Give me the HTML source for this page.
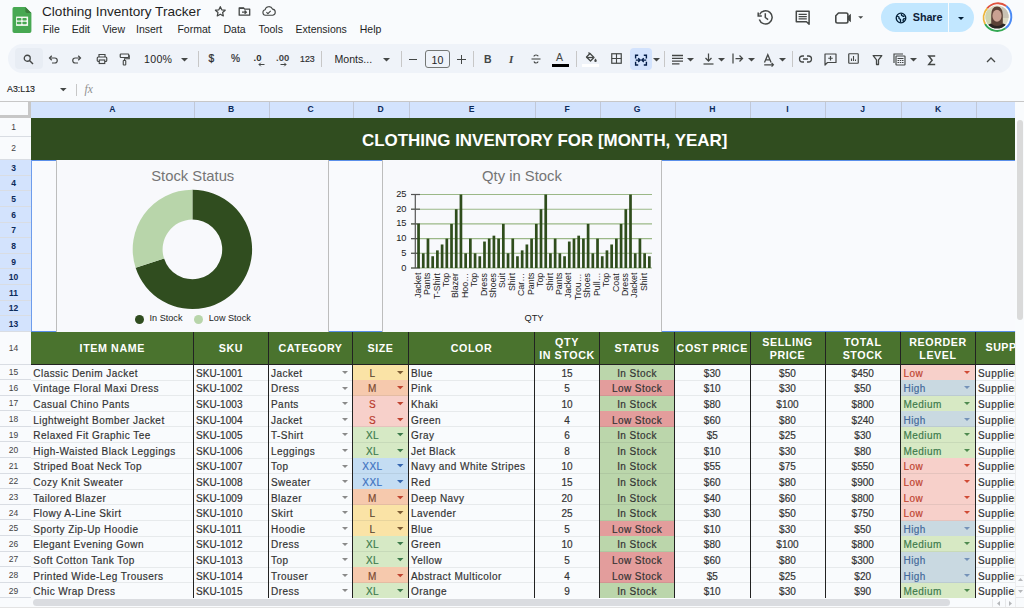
<!DOCTYPE html><html><head><meta charset="utf-8"><style>
*{box-sizing:border-box;margin:0;padding:0}
html,body{width:1024px;height:608px;overflow:hidden;background:#F9FBFD;font-family:"Liberation Sans",sans-serif;color:#1f1f1f}
.a{position:absolute}
.t{position:absolute;white-space:nowrap;line-height:1}
.mont{letter-spacing:0.7px}
svg{position:absolute;overflow:visible}
</style></head><body>

<svg class="a" style="left:12px;top:7px" width="20" height="26" viewBox="0 0 20 26">
<path d="M1.8 0H13.4L19.4 6V24.2A1.8 1.8 0 0 1 17.6 26H2.3A1.8 1.8 0 0 1 0.5 24.2V1.8A1.8 1.8 0 0 1 1.8 0Z" fill="#47A852"/>
<path d="M13.4 0L19.4 6H15.2A1.8 1.8 0 0 1 13.4 4.2Z" fill="#3A7D3C"/>
<rect x="4.1" y="9.6" width="12" height="9.3" fill="#F4F8F2"/>
<rect x="4.9" y="10.9" width="4.5" height="2.6" rx="0.8" fill="#47A852"/><rect x="10.4" y="10.9" width="4.3" height="2.6" rx="0.8" fill="#47A852"/>
<rect x="4.9" y="14.7" width="4.5" height="2.6" rx="0.8" fill="#47A852"/><rect x="10.4" y="14.7" width="4.3" height="2.6" rx="0.8" fill="#47A852"/>
</svg>
<div class="t" style="left:42px;top:4.5px;font-size:13.6px;color:#1f1f1f">Clothing Inventory Tracker</div>
<div class="t" style="left:42.8px;top:23.5px;font-size:10.5px;color:#1f1f1f">File</div>
<div class="t" style="left:71.8px;top:23.5px;font-size:10.5px;color:#1f1f1f">Edit</div>
<div class="t" style="left:102.4px;top:23.5px;font-size:10.5px;color:#1f1f1f">View</div>
<div class="t" style="left:136px;top:23.5px;font-size:10.5px;color:#1f1f1f">Insert</div>
<div class="t" style="left:177.4px;top:23.5px;font-size:10.5px;color:#1f1f1f">Format</div>
<div class="t" style="left:223.5px;top:23.5px;font-size:10.5px;color:#1f1f1f">Data</div>
<div class="t" style="left:258.4px;top:23.5px;font-size:10.5px;color:#1f1f1f">Tools</div>
<div class="t" style="left:295.5px;top:23.5px;font-size:10.5px;color:#1f1f1f">Extensions</div>
<div class="t" style="left:359.75px;top:23.5px;font-size:10.5px;color:#1f1f1f">Help</div>
<svg style="left:0;top:0" width="300" height="30" viewBox="0 0 300 30">
<path transform="translate(220.3 11.6) scale(0.88) translate(-220.3 -11.2)" d="M220.3 5.6l1.65 3.55 3.9 0.45-2.9 2.65 0.8 3.85-3.45-1.95-3.45 1.95 0.8-3.85-2.9-2.65 3.9-0.45z" fill="none" stroke="#444746" stroke-width="1.4" stroke-linejoin="round"/>
<path d="M239.2 7.8h4.2l1.2 1.3h5.1v6.1h-10.5z" fill="none" stroke="#444746" stroke-width="1.3" stroke-linejoin="round"/>
<path d="M239.2 7.8h4.2l1.2 1.3h-5.4z" fill="#444746"/>
<path d="M242 12.2h4.4M244.6 10.5l1.8 1.7-1.8 1.7" fill="none" stroke="#444746" stroke-width="1.2"/>
<path transform="translate(268.3 11.5) scale(0.93) translate(-268.3 -11.5)" d="M265.2 15.6a3 3 0 0 1-0.4-5.9 4.2 4.2 0 0 1 8-0.8 3.4 3.4 0 0 1 0.3 6.7z" fill="none" stroke="#444746" stroke-width="1.2" stroke-linejoin="round"/>
<path d="M266.4 12.1l1.5 1.5 2.8-2.8" fill="none" stroke="#444746" stroke-width="1.1"/>
</svg>

<svg style="left:0;top:0" width="1024" height="40" viewBox="0 0 1024 40">
<path d="M759.6 14.5A6.6 6.6 0 1 1 759.3 19.5" fill="none" stroke="#444746" stroke-width="1.5"/>
<path d="M758.2 12.5v3.6h3.6" fill="none" stroke="#444746" stroke-width="1.5"/>
<path d="M765.3 13.2v4.3l2.8 2.2" fill="none" stroke="#444746" stroke-width="1.5"/>
<path d="M796.3 11.2h12.8v13l-2.6-2.4h-10.2z" fill="none" stroke="#444746" stroke-width="1.5" stroke-linejoin="round"/>
<path d="M798.6 14.3h8.2M798.6 16.6h8.2M798.6 18.9h8.2" stroke="#444746" stroke-width="1.2"/>
<path d="M838.5 13h7.7q1.7 0 1.7 1.7v6.6q0 1.7-1.7 1.7h-8.7q-1.7 0-1.7-1.7v-5.6z" fill="none" stroke="#444746" stroke-width="1.6" stroke-linejoin="round"/>
<path d="M847.5 16.5l3.4-2.8v8.6l-3.4-2.8z" fill="#444746"/>
<path d="M858.2 16.2h5l-2.5 2.5z" fill="#444746"/>
</svg>

<div class="a" style="left:881px;top:3px;width:93px;height:29px;border-radius:15px;background:#C2E7FF"></div>
<div class="a" style="left:948px;top:3px;width:1px;height:29px;background:#F9FBFD"></div>
<svg style="left:894.5px;top:11.5px" width="12" height="12" viewBox="0 0 24 24"><circle cx="12" cy="12" r="9.6" fill="none" stroke="#001d35" stroke-width="2.6"/><path d="M4 8l4 2v3l3 2v6M13 3.5v3l3 2h3M21 14l-3-1-2 3 1 4" fill="none" stroke="#001d35" stroke-width="2.6" stroke-linejoin="round"/></svg>
<div class="t" style="left:912.8px;top:11.8px;font-size:10.8px;font-weight:bold;color:#0e2238;letter-spacing:-0.1px">Share</div>
<svg style="left:957.8px;top:16.5px" width="6" height="3" viewBox="0 0 8 4"><path d="M0 0h8L4 4z" fill="#001d35"/></svg>

<svg style="left:982.3px;top:2.3px" width="30" height="30" viewBox="0 0 30 30">
<path d="M5.2 6.3A14 14 0 0 1 24.3 4.1" fill="none" stroke="#E0533F" stroke-width="1.9"/>
<path d="M24.3 4.1A14 14 0 0 1 23.5 26.2" fill="none" stroke="#4A8AF4" stroke-width="1.9"/>
<path d="M23.5 26.2A14 14 0 0 1 3.1 22" fill="none" stroke="#34A853" stroke-width="1.9"/>
<path d="M3.1 22A14 14 0 0 1 5.2 6.3" fill="none" stroke="#EDB53A" stroke-width="1.9"/>
<defs><clipPath id="avc"><circle cx="15" cy="15" r="11.6"/></clipPath></defs>
<g clip-path="url(#avc)">
<rect width="30" height="30" fill="#dcd9c2"/>
<rect x="2" y="8" width="7" height="14" fill="#cfd4b0"/>
<rect x="20" y="4" width="8" height="12" fill="#c9c2b4"/>
<path d="M9.2 26V13q0-8.5 5.8-8.5t5.8 8.5v13z" fill="#5b4236"/>
<ellipse cx="15" cy="13.8" rx="4.6" ry="6" fill="#c9a192"/>
<path d="M2 30q1-7 7-8.5 3 2.5 6 2.5t6-2.5q6 1.5 7 8.5z" fill="#2a2522"/>
</g>
</svg>
<div class="a" style="left:8px;top:43.5px;width:1004px;height:29.5px;border-radius:15px;background:#EFF3F9"></div>
<div class="a" style="left:15px;top:48px;width:28px;height:21px;border-radius:4px;background:#E8EDF4"></div>
<div class="a" style="left:0;top:0.8px;width:1024px;height:0">
<svg style="left:23px;top:53px" width="11" height="11" viewBox="0 0 22 22"><circle cx="8.5" cy="8.5" r="6" fill="none" stroke="#444746" stroke-width="2.6"/><path d="M13 13l7 7" stroke="#444746" stroke-width="2.8"/></svg>
<svg style="left:48px;top:53px" width="11" height="11" viewBox="0 0 22 22"><path d="M4 8h9.5a5 5 0 0 1 0 10H8" fill="none" stroke="#444746" stroke-width="2.4"/><path d="M7.5 3.5L3 8l4.5 4.5" fill="none" stroke="#444746" stroke-width="2.4"/></svg>
<svg style="left:71px;top:53px" width="11" height="11" viewBox="0 0 22 22"><path d="M18 8H8.5a5 5 0 0 0 0 10H14" fill="none" stroke="#444746" stroke-width="2.4"/><path d="M14.5 3.5L19 8l-4.5 4.5" fill="none" stroke="#444746" stroke-width="2.4"/></svg>
<svg style="left:95.5px;top:52.5px" width="12" height="12" viewBox="0 0 24 24"><path d="M6 8V3h12v5" fill="none" stroke="#444746" stroke-width="2.3"/><rect x="2.5" y="8" width="19" height="9" rx="2" fill="none" stroke="#444746" stroke-width="2.3"/><rect x="6.5" y="14" width="11" height="7" fill="#EFF3F9" stroke="#444746" stroke-width="2.3"/></svg>
<svg style="left:119px;top:52px" width="11" height="13" viewBox="0 0 22 26"><rect x="2.5" y="2" width="17" height="7" rx="1.5" fill="none" stroke="#444746" stroke-width="2.4"/><path d="M19.5 5.5h1v6H11v4" fill="none" stroke="#444746" stroke-width="2.2"/><rect x="8.5" y="15" width="5" height="9" rx="1.2" fill="none" stroke="#444746" stroke-width="2.2"/></svg>
<div class="t" style="left:144px;top:53.5px;font-size:10.6px;color:#1f1f1f;letter-spacing:0.3px">100%</div>
<svg style="left:181.0px;top:57px" width="7" height="3.5" viewBox="0 0 8 4"><path d="M0 0h8L4 4z" fill="#444746"/></svg>
<div class="a" style="left:198px;top:50.5px;width:1px;height:16px;background:#C7C7C7"></div>
<div class="t" style="left:208.5px;top:53.5px;font-size:10.2px;color:#2f3032;-webkit-text-stroke:0.25px #2f3032">$</div>
<div class="t" style="left:231px;top:53.5px;font-size:10.2px;color:#2f3032;-webkit-text-stroke:0.2px #2f3032">%</div>
<div class="t" style="left:253.5px;top:52px;font-size:9.5px;font-weight:bold;color:#2f3032">.0</div><svg style="left:258px;top:61px" width="7" height="5" viewBox="0 0 14 10"><path d="M13 5H2M5.5 1.5L2 5l3.5 3.5" fill="none" stroke="#444746" stroke-width="2"/></svg>
<div class="t" style="left:276px;top:52px;font-size:9.5px;font-weight:bold;color:#444746">.00</div><svg style="left:280px;top:61px" width="7" height="5" viewBox="0 0 14 10"><path d="M1 5h11M8.5 1.5L12 5l-3.5 3.5" fill="none" stroke="#444746" stroke-width="2"/></svg>
<div class="t" style="left:300px;top:54px;font-size:8.8px;color:#2f3032;-webkit-text-stroke:0.2px #2f3032">123</div>
<div class="a" style="left:320.5px;top:50.5px;width:1px;height:16px;background:#C7C7C7"></div>
<div class="t" style="left:334.5px;top:53.5px;font-size:10.6px;color:#1f1f1f">Monts...</div>
<svg style="left:383.0px;top:57px" width="7" height="3.5" viewBox="0 0 8 4"><path d="M0 0h8L4 4z" fill="#444746"/></svg>
<div class="a" style="left:401px;top:50.5px;width:1px;height:16px;background:#C7C7C7"></div>
<div class="a" style="left:409px;top:58px;width:8px;height:1.3px;background:#444746"></div>
<div class="a" style="left:425px;top:49.5px;width:25px;height:18px;border:1px solid #747775;border-radius:3px"></div>
<div class="t" style="left:431.5px;top:54px;font-size:10.6px;color:#1f1f1f">10</div>
<div class="a" style="left:457px;top:58px;width:9px;height:1.3px;background:#444746"></div><div class="a" style="left:460.85px;top:54px;width:1.3px;height:9px;background:#444746"></div>
<div class="a" style="left:472.5px;top:50.5px;width:1px;height:16px;background:#C7C7C7"></div>
<div class="t" style="left:484px;top:53px;font-size:10.5px;font-weight:bold;color:#444746">B</div>
<div class="t" style="left:509px;top:53px;font-size:11px;font-style:italic;font-weight:bold;font-family:Liberation Serif,serif;color:#444746">I</div>
<svg style="left:530px;top:52px" width="12" height="12" viewBox="0 0 24 24"><path d="M3 12h18" stroke="#444746" stroke-width="2.2"/><path d="M16.5 6.5Q15.5 4 12 4Q8 4 8 7M8 17Q9 20 12 20Q16 20 16 17" fill="none" stroke="#444746" stroke-width="2.4"/></svg>
<div class="t" style="left:556px;top:51.5px;font-size:10.5px;color:#444746">A</div><div class="a" style="left:552px;top:63px;width:17px;height:3px;background:#000"></div>
<div class="a" style="left:576px;top:50.5px;width:1px;height:16px;background:#C7C7C7"></div>
<svg style="left:584px;top:51px" width="14" height="12" viewBox="0 0 28 24"><path d="M5 10L12 3l8 8-7 7z" fill="none" stroke="#444746" stroke-width="2.6" stroke-linejoin="round"/><path d="M5 11h14" stroke="#444746" stroke-width="2.5"/><path d="M23 13q-2.5 3-2.5 4.5a2.5 2.5 0 0 0 5 0q0-1.5-2.5-4.5z" fill="#444746"/><path d="M9 1l3 3" stroke="#444746" stroke-width="2.4"/></svg><div class="a" style="left:582px;top:63.5px;width:17px;height:2.5px;background:#fff"></div>
<svg style="left:610.5px;top:52.5px" width="11" height="11" viewBox="0 0 22 22"><rect x="1.5" y="1.5" width="19" height="19" fill="none" stroke="#444746" stroke-width="2.4"/><path d="M11 1.5v19M1.5 11h19" stroke="#444746" stroke-width="2.2"/></svg>
<div class="a" style="left:629.5px;top:47px;width:22.5px;height:22px;border-radius:4px;background:#D3E3FD"></div>
<svg style="left:0;top:0" width="1024" height="80" viewBox="0 0 1024 80"><path d="M638.2 54.2h-2.6v3.2M635.6 60.8v3.2h2.6M643.8 54.2h2.6v3.2M646.4 60.8v3.2h-2.6" fill="none" stroke="#041E49" stroke-width="1.4"/><path d="M635.8 59.1h3.8M638.2 57.2l2 1.9-2 1.9M646.2 59.1h-3.8M643.8 57.2l-2 1.9 2 1.9" fill="none" stroke="#041E49" stroke-width="1.3"/></svg>
<svg style="left:653.0px;top:57px" width="7" height="3.5" viewBox="0 0 8 4"><path d="M0 0h8L4 4z" fill="#444746"/></svg>
<div class="a" style="left:664px;top:50.5px;width:1px;height:16px;background:#C7C7C7"></div>
<svg style="left:0;top:0" width="1024" height="80" viewBox="0 0 1024 80"><path d="M672 54.5h11M672 57.3h11M672 60.1h11M672 62.9h7.5" stroke="#444746" stroke-width="1.3"/></svg>
<svg style="left:686.5px;top:57px" width="7" height="3.5" viewBox="0 0 8 4"><path d="M0 0h8L4 4z" fill="#444746"/></svg>
<svg style="left:703px;top:52px" width="11" height="12" viewBox="0 0 22 24"><path d="M11 1v15M5 10l6 6 6-6" fill="none" stroke="#444746" stroke-width="2.5"/><path d="M1 22h20" stroke="#444746" stroke-width="2.5"/></svg>
<svg style="left:717.5px;top:57px" width="7" height="3.5" viewBox="0 0 8 4"><path d="M0 0h8L4 4z" fill="#444746"/></svg>
<svg style="left:732px;top:52.5px" width="12" height="11" viewBox="0 0 24 22"><path d="M2 1v20" stroke="#444746" stroke-width="2.5"/><path d="M7 11h14M15 5l6 6-6 6" fill="none" stroke="#444746" stroke-width="2.5"/></svg>
<svg style="left:748.0px;top:57px" width="7" height="3.5" viewBox="0 0 8 4"><path d="M0 0h8L4 4z" fill="#444746"/></svg>
<svg style="left:0;top:0" width="1024" height="80" viewBox="0 0 1024 80"><path d="M764.5 61.5l3.3-7.8 3.3 7.8M765.7 58.8h4.2" fill="none" stroke="#444746" stroke-width="1.3"/><path d="M764.2 63.8h9M771.6 62l1.8 1.8-1.8 1.8" fill="none" stroke="#444746" stroke-width="1.2"/></svg>
<svg style="left:779.0px;top:57px" width="7" height="3.5" viewBox="0 0 8 4"><path d="M0 0h8L4 4z" fill="#444746"/></svg>
<div class="a" style="left:792px;top:50.5px;width:1px;height:16px;background:#C7C7C7"></div>
<svg style="left:799px;top:54px" width="13" height="8" viewBox="0 0 26 16"><path d="M10 2H7a6 6 0 0 0 0 12h3M16 2h3a6 6 0 0 1 0 12h-3M8 8h10" fill="none" stroke="#444746" stroke-width="2.6"/></svg>
<svg style="left:823.5px;top:52px" width="13" height="13" viewBox="0 0 26 26"><path d="M2 2h22v17H7l-5 5z" fill="none" stroke="#444746" stroke-width="2.4" stroke-linejoin="round"/><path d="M13 6v9M8.5 10.5h9" stroke="#444746" stroke-width="2.4"/></svg>
<svg style="left:848px;top:52.5px" width="11" height="11" viewBox="0 0 22 22"><rect x="1.5" y="1.5" width="19" height="19" rx="1" fill="none" stroke="#444746" stroke-width="2.4"/><path d="M7 16V11M11 16V6M15 16v-3" stroke="#444746" stroke-width="2.2"/></svg>
<svg style="left:0;top:0" width="1024" height="80" viewBox="0 0 1024 80"><path d="M873.2 54.6h8.6l-3.3 4.3v4.6h-2v-4.6z" fill="none" stroke="#444746" stroke-width="1.3" stroke-linejoin="round"/></svg>
<svg style="left:893px;top:52px" width="13" height="13" viewBox="0 0 26 26"><rect x="6" y="6" width="18" height="18" rx="1" fill="none" stroke="#444746" stroke-width="2.3"/><path d="M2 20V2h18" fill="none" stroke="#444746" stroke-width="2.3"/><path d="M9 11h12M9 15h3M13.5 15h3M18 15h3M9 19h3M13.5 19h3M18 19h3" stroke="#444746" stroke-width="2"/></svg>
<svg style="left:909.5px;top:57px" width="7" height="3.5" viewBox="0 0 8 4"><path d="M0 0h8L4 4z" fill="#444746"/></svg>
<svg style="left:0;top:0" width="1024" height="80" viewBox="0 0 1024 80"><path d="M935.2 55h-6.4l3.3 4.2-3.3 4.2h6.4" fill="none" stroke="#444746" stroke-width="1.5" stroke-linejoin="miter"/></svg>
<svg style="left:986px;top:56px" width="10" height="6" viewBox="0 0 20 12"><path d="M2 10l8-8 8 8" fill="none" stroke="#444746" stroke-width="2.6"/></svg>
</div>
<div class="t" style="left:7px;top:85.4px;font-size:8.85px;color:#1f1f1f;-webkit-text-stroke:0.15px #1f1f1f">A3:L13</div>
<svg style="left:60.2px;top:87.6px" width="6.6" height="3.3" viewBox="0 0 8 4"><path d="M0 0h8L4 4z" fill="#444746"/></svg>
<div class="a" style="left:76px;top:84px;width:1px;height:12px;background:#C7C7C7"></div>
<div class="t" style="left:84.5px;top:83.5px;font-size:11.5px;font-style:italic;font-family:'Liberation Serif',serif;color:#8f8f8f">fx</div>
<div class="a" style="left:0;top:100.5px;width:1024px;height:1px;background:#C7C7C7"></div>
<div class="a" style="left:0;top:101.5px;width:31px;height:16.5px;background:#F9FBFD"></div>
<div class="a" style="left:31px;top:101.5px;width:984px;height:16.5px;background:#D3E3FD"></div>
<div class="a" style="left:27.5px;top:101px;width:3.5px;height:17px;background:#C7C7C7"></div>
<div class="a" style="left:0;top:115px;width:31px;height:3px;background:#C7C7C7"></div>
<div class="a" style="left:193.5px;top:101.5px;width:1px;height:16.5px;background:#C0C8D8"></div>
<div class="t" style="left:31px;width:162.5px;text-align:center;top:105px;font-size:8.6px;font-weight:bold;color:#0b2a5a">A</div>
<div class="a" style="left:268.5px;top:101.5px;width:1px;height:16.5px;background:#C0C8D8"></div>
<div class="t" style="left:193.5px;width:75.0px;text-align:center;top:105px;font-size:8.6px;font-weight:bold;color:#0b2a5a">B</div>
<div class="a" style="left:352.5px;top:101.5px;width:1px;height:16.5px;background:#C0C8D8"></div>
<div class="t" style="left:268.5px;width:84.0px;text-align:center;top:105px;font-size:8.6px;font-weight:bold;color:#0b2a5a">C</div>
<div class="a" style="left:408.5px;top:101.5px;width:1px;height:16.5px;background:#C0C8D8"></div>
<div class="t" style="left:352.5px;width:56.0px;text-align:center;top:105px;font-size:8.6px;font-weight:bold;color:#0b2a5a">D</div>
<div class="a" style="left:534.5px;top:101.5px;width:1px;height:16.5px;background:#C0C8D8"></div>
<div class="t" style="left:408.5px;width:126.0px;text-align:center;top:105px;font-size:8.6px;font-weight:bold;color:#0b2a5a">E</div>
<div class="a" style="left:599.5px;top:101.5px;width:1px;height:16.5px;background:#C0C8D8"></div>
<div class="t" style="left:534.5px;width:65.0px;text-align:center;top:105px;font-size:8.6px;font-weight:bold;color:#0b2a5a">F</div>
<div class="a" style="left:674.5px;top:101.5px;width:1px;height:16.5px;background:#C0C8D8"></div>
<div class="t" style="left:599.5px;width:75.0px;text-align:center;top:105px;font-size:8.6px;font-weight:bold;color:#0b2a5a">G</div>
<div class="a" style="left:750px;top:101.5px;width:1px;height:16.5px;background:#C0C8D8"></div>
<div class="t" style="left:674.5px;width:75.5px;text-align:center;top:105px;font-size:8.6px;font-weight:bold;color:#0b2a5a">H</div>
<div class="a" style="left:825px;top:101.5px;width:1px;height:16.5px;background:#C0C8D8"></div>
<div class="t" style="left:750px;width:75px;text-align:center;top:105px;font-size:8.6px;font-weight:bold;color:#0b2a5a">I</div>
<div class="a" style="left:900.5px;top:101.5px;width:1px;height:16.5px;background:#C0C8D8"></div>
<div class="t" style="left:825px;width:75.5px;text-align:center;top:105px;font-size:8.6px;font-weight:bold;color:#0b2a5a">J</div>
<div class="a" style="left:975.5px;top:101.5px;width:1px;height:16.5px;background:#C0C8D8"></div>
<div class="t" style="left:900.5px;width:75.0px;text-align:center;top:105px;font-size:8.6px;font-weight:bold;color:#0b2a5a">K</div>
<div class="t" style="left:975.5px;width:39.5px;text-align:center;top:105px;font-size:8.6px;font-weight:bold;color:#0b2a5a"></div>
<div class="a" style="left:1015px;top:101.5px;width:9px;height:507px;background:#F9FBFD"></div>
<div class="a" style="left:1016.6px;top:120px;width:6.2px;height:199.5px;border-radius:3.5px;background:#DADADA"></div>
<div class="a" style="left:0;top:118px;width:31px;height:19px;background:#F9FBFD;border-bottom:1px solid #D9DDE3"></div>
<div class="t" style="left:-2px;width:31px;text-align:center;top:123.4px;font-size:8.5px;font-weight:normal;color:#444">1</div>
<div class="a" style="left:0;top:137px;width:31px;height:23px;background:#F9FBFD;border-bottom:1px solid #D9DDE3"></div>
<div class="t" style="left:-2px;width:31px;text-align:center;top:144.4px;font-size:8.5px;font-weight:normal;color:#444">2</div>
<div class="a" style="left:0;top:160px;width:31px;height:15.636363636363626px;background:#D3E3FD;border-bottom:1px solid #D9DDE3"></div>
<div class="t" style="left:-2px;width:31px;text-align:center;top:163.71818181818182px;font-size:8.5px;font-weight:bold;color:#0b2a5a">3</div>
<div class="a" style="left:0;top:175.63636363636363px;width:31px;height:15.636363636363626px;background:#D3E3FD;border-bottom:1px solid #D9DDE3"></div>
<div class="t" style="left:-2px;width:31px;text-align:center;top:179.35454545454544px;font-size:8.5px;font-weight:bold;color:#0b2a5a">4</div>
<div class="a" style="left:0;top:191.27272727272725px;width:31px;height:15.636363636363626px;background:#D3E3FD;border-bottom:1px solid #D9DDE3"></div>
<div class="t" style="left:-2px;width:31px;text-align:center;top:194.99090909090907px;font-size:8.5px;font-weight:bold;color:#0b2a5a">5</div>
<div class="a" style="left:0;top:206.90909090909088px;width:31px;height:15.636363636363626px;background:#D3E3FD;border-bottom:1px solid #D9DDE3"></div>
<div class="t" style="left:-2px;width:31px;text-align:center;top:210.6272727272727px;font-size:8.5px;font-weight:bold;color:#0b2a5a">6</div>
<div class="a" style="left:0;top:222.5454545454545px;width:31px;height:15.636363636363626px;background:#D3E3FD;border-bottom:1px solid #D9DDE3"></div>
<div class="t" style="left:-2px;width:31px;text-align:center;top:226.26363636363632px;font-size:8.5px;font-weight:bold;color:#0b2a5a">7</div>
<div class="a" style="left:0;top:238.18181818181813px;width:31px;height:15.636363636363626px;background:#D3E3FD;border-bottom:1px solid #D9DDE3"></div>
<div class="t" style="left:-2px;width:31px;text-align:center;top:241.89999999999995px;font-size:8.5px;font-weight:bold;color:#0b2a5a">8</div>
<div class="a" style="left:0;top:253.81818181818176px;width:31px;height:15.636363636363626px;background:#D3E3FD;border-bottom:1px solid #D9DDE3"></div>
<div class="t" style="left:-2px;width:31px;text-align:center;top:257.53636363636355px;font-size:8.5px;font-weight:bold;color:#0b2a5a">9</div>
<div class="a" style="left:0;top:269.4545454545454px;width:31px;height:15.636363636363626px;background:#D3E3FD;border-bottom:1px solid #D9DDE3"></div>
<div class="t" style="left:-2px;width:31px;text-align:center;top:273.1727272727272px;font-size:8.5px;font-weight:bold;color:#0b2a5a">10</div>
<div class="a" style="left:0;top:285.090909090909px;width:31px;height:15.636363636363626px;background:#D3E3FD;border-bottom:1px solid #D9DDE3"></div>
<div class="t" style="left:-2px;width:31px;text-align:center;top:288.8090909090908px;font-size:8.5px;font-weight:bold;color:#0b2a5a">11</div>
<div class="a" style="left:0;top:300.72727272727263px;width:31px;height:15.636363636363626px;background:#D3E3FD;border-bottom:1px solid #D9DDE3"></div>
<div class="t" style="left:-2px;width:31px;text-align:center;top:304.4454545454544px;font-size:8.5px;font-weight:bold;color:#0b2a5a">12</div>
<div class="a" style="left:0;top:316.36363636363626px;width:31px;height:15.636363636363626px;background:#D3E3FD;border-bottom:1px solid #D9DDE3"></div>
<div class="t" style="left:-2px;width:31px;text-align:center;top:320.08181818181805px;font-size:8.5px;font-weight:bold;color:#0b2a5a">13</div>
<div class="a" style="left:0;top:332px;width:31px;height:32.5px;background:#F9FBFD;border-bottom:1px solid #D9DDE3"></div>
<div class="t" style="left:-2px;width:31px;text-align:center;top:344.15px;font-size:8.5px;font-weight:normal;color:#444">14</div>
<div class="a" style="left:0;top:364.5px;width:31px;height:15.600000000000023px;background:#F9FBFD;border-bottom:1px solid #D9DDE3"></div>
<div class="t" style="left:-2px;width:31px;text-align:center;top:368.2px;font-size:8.5px;font-weight:normal;color:#444">15</div>
<div class="a" style="left:0;top:380.1px;width:31px;height:15.600000000000023px;background:#F9FBFD;border-bottom:1px solid #D9DDE3"></div>
<div class="t" style="left:-2px;width:31px;text-align:center;top:383.8px;font-size:8.5px;font-weight:normal;color:#444">16</div>
<div class="a" style="left:0;top:395.70000000000005px;width:31px;height:15.600000000000023px;background:#F9FBFD;border-bottom:1px solid #D9DDE3"></div>
<div class="t" style="left:-2px;width:31px;text-align:center;top:399.40000000000003px;font-size:8.5px;font-weight:normal;color:#444">17</div>
<div class="a" style="left:0;top:411.30000000000007px;width:31px;height:15.600000000000023px;background:#F9FBFD;border-bottom:1px solid #D9DDE3"></div>
<div class="t" style="left:-2px;width:31px;text-align:center;top:415.00000000000006px;font-size:8.5px;font-weight:normal;color:#444">18</div>
<div class="a" style="left:0;top:426.9000000000001px;width:31px;height:15.600000000000023px;background:#F9FBFD;border-bottom:1px solid #D9DDE3"></div>
<div class="t" style="left:-2px;width:31px;text-align:center;top:430.6000000000001px;font-size:8.5px;font-weight:normal;color:#444">19</div>
<div class="a" style="left:0;top:442.5000000000001px;width:31px;height:15.600000000000023px;background:#F9FBFD;border-bottom:1px solid #D9DDE3"></div>
<div class="t" style="left:-2px;width:31px;text-align:center;top:446.2000000000001px;font-size:8.5px;font-weight:normal;color:#444">20</div>
<div class="a" style="left:0;top:458.10000000000014px;width:31px;height:15.600000000000023px;background:#F9FBFD;border-bottom:1px solid #D9DDE3"></div>
<div class="t" style="left:-2px;width:31px;text-align:center;top:461.8000000000001px;font-size:8.5px;font-weight:normal;color:#444">21</div>
<div class="a" style="left:0;top:473.70000000000016px;width:31px;height:15.600000000000023px;background:#F9FBFD;border-bottom:1px solid #D9DDE3"></div>
<div class="t" style="left:-2px;width:31px;text-align:center;top:477.40000000000015px;font-size:8.5px;font-weight:normal;color:#444">22</div>
<div class="a" style="left:0;top:489.3000000000002px;width:31px;height:15.600000000000023px;background:#F9FBFD;border-bottom:1px solid #D9DDE3"></div>
<div class="t" style="left:-2px;width:31px;text-align:center;top:493.00000000000017px;font-size:8.5px;font-weight:normal;color:#444">23</div>
<div class="a" style="left:0;top:504.9000000000002px;width:31px;height:15.600000000000023px;background:#F9FBFD;border-bottom:1px solid #D9DDE3"></div>
<div class="t" style="left:-2px;width:31px;text-align:center;top:508.60000000000025px;font-size:8.5px;font-weight:normal;color:#444">24</div>
<div class="a" style="left:0;top:520.5000000000002px;width:31px;height:15.600000000000023px;background:#F9FBFD;border-bottom:1px solid #D9DDE3"></div>
<div class="t" style="left:-2px;width:31px;text-align:center;top:524.2000000000002px;font-size:8.5px;font-weight:normal;color:#444">25</div>
<div class="a" style="left:0;top:536.1000000000003px;width:31px;height:15.600000000000023px;background:#F9FBFD;border-bottom:1px solid #D9DDE3"></div>
<div class="t" style="left:-2px;width:31px;text-align:center;top:539.8000000000003px;font-size:8.5px;font-weight:normal;color:#444">26</div>
<div class="a" style="left:0;top:551.7000000000003px;width:31px;height:15.600000000000023px;background:#F9FBFD;border-bottom:1px solid #D9DDE3"></div>
<div class="t" style="left:-2px;width:31px;text-align:center;top:555.4000000000002px;font-size:8.5px;font-weight:normal;color:#444">27</div>
<div class="a" style="left:0;top:567.3000000000003px;width:31px;height:15.600000000000023px;background:#F9FBFD;border-bottom:1px solid #D9DDE3"></div>
<div class="t" style="left:-2px;width:31px;text-align:center;top:571.0000000000003px;font-size:8.5px;font-weight:normal;color:#444">28</div>
<div class="a" style="left:0;top:582.9000000000003px;width:31px;height:15.600000000000023px;background:#F9FBFD;border-bottom:1px solid #D9DDE3"></div>
<div class="t" style="left:-2px;width:31px;text-align:center;top:586.6000000000003px;font-size:8.5px;font-weight:normal;color:#444">29</div>
<div class="a" style="left:30.5px;top:118px;width:1px;height:490px;background:#C7C7C7"></div>
<div class="a" style="left:31px;top:118px;width:984px;height:490px;background:#F9FBFD"></div>
<div class="a" style="left:31px;top:118px;width:984px;height:42px;background:#304D1F"></div>
<div class="t" style="left:362px;top:132.5px;font-size:16.95px;font-weight:bold;color:#fff;letter-spacing:0px">CLOTHING INVENTORY FOR [MONTH, YEAR]</div>
<div class="a" style="left:31px;top:160px;width:984px;height:172px;background:#F9FAFD"></div>
<div class="a" style="left:31px;top:160px;width:984px;height:1.3px;background:#5B8FEA"></div>
<div class="a" style="left:31px;top:160px;width:1.2px;height:172px;background:#6E9CEC"></div>
<div class="a" style="left:31px;top:331px;width:984px;height:1.3px;background:#5B8FEA"></div>
<div class="a" style="left:56px;top:160px;width:273px;height:172px;background:#F8F9FC;border:1px solid #BDBDBD;border-top:none;border-bottom:none"></div>
<div class="a" style="left:381.8px;top:160px;width:280px;height:172px;background:#F8F9FC;border:1px solid #BDBDBD;border-top:none;border-bottom:none"></div>
<div class="t" style="left:56.5px;width:272.5px;text-align:center;top:168.5px;font-size:14.8px;color:#757575">Stock Status</div>
<div class="t" style="left:382px;width:280px;text-align:center;top:168.5px;font-size:14.8px;color:#757575">Qty in Stock</div>
<svg style="left:0;top:0" width="1024" height="608" viewBox="0 0 1024 608"><path d="M192.40 189.70A59.7 59.7 0 1 1 135.62 267.85L164.06 258.61A29.8 29.8 0 1 0 192.40 219.60Z" fill="#304D1F"/><path d="M135.62 267.85A59.7 59.7 0 0 1 192.40 189.70L192.40 219.60A29.8 29.8 0 0 0 164.06 258.61Z" fill="#B8D5AA"/></svg>
<div class="a" style="left:135.2px;top:314.5px;width:9px;height:9px;border-radius:50%;background:#304D1F"></div>
<div class="t" style="left:149.6px;top:314.3px;font-size:9.1px;color:#222">In Stock</div>
<div class="a" style="left:194.2px;top:314.5px;width:9px;height:9px;border-radius:50%;background:#B8D5AA"></div>
<div class="t" style="left:208.8px;top:314.3px;font-size:9.1px;color:#222">Low Stock</div>
<svg style="left:0;top:0" width="1024" height="608" viewBox="0 0 1024 608"><line x1="411" x2="652" y1="268.00" y2="268.00" stroke="#9BB887" stroke-width="1.1"/><line x1="411" x2="652" y1="253.30" y2="253.30" stroke="#9BB887" stroke-width="1.1"/><line x1="411" x2="652" y1="238.60" y2="238.60" stroke="#9BB887" stroke-width="1.1"/><line x1="411" x2="652" y1="223.90" y2="223.90" stroke="#9BB887" stroke-width="1.1"/><line x1="411" x2="652" y1="209.20" y2="209.20" stroke="#9BB887" stroke-width="1.1"/><line x1="411" x2="652" y1="194.50" y2="194.50" stroke="#9BB887" stroke-width="1.1"/><line x1="415.3" x2="415.3" y1="194.5" y2="268" stroke="#555" stroke-width="1.2"/><line x1="411" x2="420" y1="268.00" y2="268.00" stroke="#555" stroke-width="1.2"/><line x1="411" x2="420" y1="253.30" y2="253.30" stroke="#555" stroke-width="1.2"/><line x1="411" x2="420" y1="238.60" y2="238.60" stroke="#555" stroke-width="1.2"/><line x1="411" x2="420" y1="223.90" y2="223.90" stroke="#555" stroke-width="1.2"/><line x1="411" x2="420" y1="209.20" y2="209.20" stroke="#555" stroke-width="1.2"/><line x1="411" x2="420" y1="194.50" y2="194.50" stroke="#555" stroke-width="1.2"/><rect x="417.20" y="223.90" width="2.7" height="44.10" fill="#2F4D1C"/><rect x="421.91" y="253.30" width="2.7" height="14.70" fill="#2F4D1C"/><rect x="426.62" y="238.60" width="2.7" height="29.40" fill="#2F4D1C"/><rect x="431.33" y="256.24" width="2.7" height="11.76" fill="#2F4D1C"/><rect x="436.04" y="250.36" width="2.7" height="17.64" fill="#2F4D1C"/><rect x="440.75" y="244.48" width="2.7" height="23.52" fill="#2F4D1C"/><rect x="445.46" y="238.60" width="2.7" height="29.40" fill="#2F4D1C"/><rect x="450.17" y="223.90" width="2.7" height="44.10" fill="#2F4D1C"/><rect x="454.88" y="209.20" width="2.7" height="58.80" fill="#2F4D1C"/><rect x="459.59" y="194.50" width="2.7" height="73.50" fill="#2F4D1C"/><rect x="464.30" y="253.30" width="2.7" height="14.70" fill="#2F4D1C"/><rect x="469.01" y="238.60" width="2.7" height="29.40" fill="#2F4D1C"/><rect x="473.72" y="253.30" width="2.7" height="14.70" fill="#2F4D1C"/><rect x="478.43" y="256.24" width="2.7" height="11.76" fill="#2F4D1C"/><rect x="483.14" y="241.54" width="2.7" height="26.46" fill="#2F4D1C"/><rect x="487.85" y="238.60" width="2.7" height="29.40" fill="#2F4D1C"/><rect x="492.56" y="235.66" width="2.7" height="32.34" fill="#2F4D1C"/><rect x="497.27" y="238.60" width="2.7" height="29.40" fill="#2F4D1C"/><rect x="501.98" y="223.90" width="2.7" height="44.10" fill="#2F4D1C"/><rect x="506.69" y="253.30" width="2.7" height="14.70" fill="#2F4D1C"/><rect x="511.40" y="238.60" width="2.7" height="29.40" fill="#2F4D1C"/><rect x="516.11" y="256.24" width="2.7" height="11.76" fill="#2F4D1C"/><rect x="520.82" y="250.36" width="2.7" height="17.64" fill="#2F4D1C"/><rect x="525.53" y="244.48" width="2.7" height="23.52" fill="#2F4D1C"/><rect x="530.24" y="238.60" width="2.7" height="29.40" fill="#2F4D1C"/><rect x="534.95" y="223.90" width="2.7" height="44.10" fill="#2F4D1C"/><rect x="539.66" y="209.20" width="2.7" height="58.80" fill="#2F4D1C"/><rect x="544.37" y="194.50" width="2.7" height="73.50" fill="#2F4D1C"/><rect x="549.08" y="253.30" width="2.7" height="14.70" fill="#2F4D1C"/><rect x="553.79" y="238.60" width="2.7" height="29.40" fill="#2F4D1C"/><rect x="558.50" y="253.30" width="2.7" height="14.70" fill="#2F4D1C"/><rect x="563.21" y="256.24" width="2.7" height="11.76" fill="#2F4D1C"/><rect x="567.92" y="241.54" width="2.7" height="26.46" fill="#2F4D1C"/><rect x="572.63" y="238.60" width="2.7" height="29.40" fill="#2F4D1C"/><rect x="577.34" y="235.66" width="2.7" height="32.34" fill="#2F4D1C"/><rect x="582.05" y="238.60" width="2.7" height="29.40" fill="#2F4D1C"/><rect x="586.76" y="223.90" width="2.7" height="44.10" fill="#2F4D1C"/><rect x="591.47" y="253.30" width="2.7" height="14.70" fill="#2F4D1C"/><rect x="596.18" y="238.60" width="2.7" height="29.40" fill="#2F4D1C"/><rect x="600.89" y="256.24" width="2.7" height="11.76" fill="#2F4D1C"/><rect x="605.60" y="250.36" width="2.7" height="17.64" fill="#2F4D1C"/><rect x="610.31" y="244.48" width="2.7" height="23.52" fill="#2F4D1C"/><rect x="615.02" y="238.60" width="2.7" height="29.40" fill="#2F4D1C"/><rect x="619.73" y="223.90" width="2.7" height="44.10" fill="#2F4D1C"/><rect x="624.44" y="209.20" width="2.7" height="58.80" fill="#2F4D1C"/><rect x="629.15" y="194.50" width="2.7" height="73.50" fill="#2F4D1C"/><rect x="633.86" y="253.30" width="2.7" height="14.70" fill="#2F4D1C"/><rect x="638.57" y="238.60" width="2.7" height="29.40" fill="#2F4D1C"/><rect x="643.28" y="253.30" width="2.7" height="14.70" fill="#2F4D1C"/><rect x="647.99" y="256.24" width="2.7" height="11.76" fill="#2F4D1C"/></svg>
<div class="t" style="left:380px;width:26.5px;text-align:right;top:263.50px;font-size:9.3px;color:#222">0</div>
<div class="t" style="left:380px;width:26.5px;text-align:right;top:248.80px;font-size:9.3px;color:#222">5</div>
<div class="t" style="left:380px;width:26.5px;text-align:right;top:234.10px;font-size:9.3px;color:#222">10</div>
<div class="t" style="left:380px;width:26.5px;text-align:right;top:219.40px;font-size:9.3px;color:#222">15</div>
<div class="t" style="left:380px;width:26.5px;text-align:right;top:204.70px;font-size:9.3px;color:#222">20</div>
<div class="t" style="left:380px;width:26.5px;text-align:right;top:190.00px;font-size:9.3px;color:#222">25</div>
<div class="a" style="left:412.70px;top:273.3px;width:10px;height:40px;writing-mode:vertical-rl;transform:rotate(180deg);text-align:right;font-size:8.8px;line-height:10px;color:#222;white-space:nowrap">Jacket</div>
<div class="a" style="left:422.12px;top:273.3px;width:10px;height:40px;writing-mode:vertical-rl;transform:rotate(180deg);text-align:right;font-size:8.8px;line-height:10px;color:#222;white-space:nowrap">Pants</div>
<div class="a" style="left:431.54px;top:273.3px;width:10px;height:40px;writing-mode:vertical-rl;transform:rotate(180deg);text-align:right;font-size:8.8px;line-height:10px;color:#222;white-space:nowrap">T-Shirt</div>
<div class="a" style="left:440.96px;top:273.3px;width:10px;height:40px;writing-mode:vertical-rl;transform:rotate(180deg);text-align:right;font-size:8.8px;line-height:10px;color:#222;white-space:nowrap">Top</div>
<div class="a" style="left:450.38px;top:273.3px;width:10px;height:40px;writing-mode:vertical-rl;transform:rotate(180deg);text-align:right;font-size:8.8px;line-height:10px;color:#222;white-space:nowrap">Blazer</div>
<div class="a" style="left:459.80px;top:273.3px;width:10px;height:40px;writing-mode:vertical-rl;transform:rotate(180deg);text-align:right;font-size:8.8px;line-height:10px;color:#222;white-space:nowrap">Hoo…</div>
<div class="a" style="left:469.22px;top:273.3px;width:10px;height:40px;writing-mode:vertical-rl;transform:rotate(180deg);text-align:right;font-size:8.8px;line-height:10px;color:#222;white-space:nowrap">Top</div>
<div class="a" style="left:478.64px;top:273.3px;width:10px;height:40px;writing-mode:vertical-rl;transform:rotate(180deg);text-align:right;font-size:8.8px;line-height:10px;color:#222;white-space:nowrap">Dress</div>
<div class="a" style="left:488.06px;top:273.3px;width:10px;height:40px;writing-mode:vertical-rl;transform:rotate(180deg);text-align:right;font-size:8.8px;line-height:10px;color:#222;white-space:nowrap">Shoes</div>
<div class="a" style="left:497.48px;top:273.3px;width:10px;height:40px;writing-mode:vertical-rl;transform:rotate(180deg);text-align:right;font-size:8.8px;line-height:10px;color:#222;white-space:nowrap">Suit</div>
<div class="a" style="left:506.90px;top:273.3px;width:10px;height:40px;writing-mode:vertical-rl;transform:rotate(180deg);text-align:right;font-size:8.8px;line-height:10px;color:#222;white-space:nowrap">Shirt</div>
<div class="a" style="left:516.32px;top:273.3px;width:10px;height:40px;writing-mode:vertical-rl;transform:rotate(180deg);text-align:right;font-size:8.8px;line-height:10px;color:#222;white-space:nowrap">Car…</div>
<div class="a" style="left:525.74px;top:273.3px;width:10px;height:40px;writing-mode:vertical-rl;transform:rotate(180deg);text-align:right;font-size:8.8px;line-height:10px;color:#222;white-space:nowrap">Pants</div>
<div class="a" style="left:535.16px;top:273.3px;width:10px;height:40px;writing-mode:vertical-rl;transform:rotate(180deg);text-align:right;font-size:8.8px;line-height:10px;color:#222;white-space:nowrap">Top</div>
<div class="a" style="left:544.58px;top:273.3px;width:10px;height:40px;writing-mode:vertical-rl;transform:rotate(180deg);text-align:right;font-size:8.8px;line-height:10px;color:#222;white-space:nowrap">Shirt</div>
<div class="a" style="left:554.00px;top:273.3px;width:10px;height:40px;writing-mode:vertical-rl;transform:rotate(180deg);text-align:right;font-size:8.8px;line-height:10px;color:#222;white-space:nowrap">Pants</div>
<div class="a" style="left:563.42px;top:273.3px;width:10px;height:40px;writing-mode:vertical-rl;transform:rotate(180deg);text-align:right;font-size:8.8px;line-height:10px;color:#222;white-space:nowrap">Jacket</div>
<div class="a" style="left:572.84px;top:273.3px;width:10px;height:40px;writing-mode:vertical-rl;transform:rotate(180deg);text-align:right;font-size:8.8px;line-height:10px;color:#222;white-space:nowrap">Trou…</div>
<div class="a" style="left:582.26px;top:273.3px;width:10px;height:40px;writing-mode:vertical-rl;transform:rotate(180deg);text-align:right;font-size:8.8px;line-height:10px;color:#222;white-space:nowrap">Shoes</div>
<div class="a" style="left:591.68px;top:273.3px;width:10px;height:40px;writing-mode:vertical-rl;transform:rotate(180deg);text-align:right;font-size:8.8px;line-height:10px;color:#222;white-space:nowrap">Pull…</div>
<div class="a" style="left:601.10px;top:273.3px;width:10px;height:40px;writing-mode:vertical-rl;transform:rotate(180deg);text-align:right;font-size:8.8px;line-height:10px;color:#222;white-space:nowrap">Top</div>
<div class="a" style="left:610.52px;top:273.3px;width:10px;height:40px;writing-mode:vertical-rl;transform:rotate(180deg);text-align:right;font-size:8.8px;line-height:10px;color:#222;white-space:nowrap">Coat</div>
<div class="a" style="left:619.94px;top:273.3px;width:10px;height:40px;writing-mode:vertical-rl;transform:rotate(180deg);text-align:right;font-size:8.8px;line-height:10px;color:#222;white-space:nowrap">Dress</div>
<div class="a" style="left:629.36px;top:273.3px;width:10px;height:40px;writing-mode:vertical-rl;transform:rotate(180deg);text-align:right;font-size:8.8px;line-height:10px;color:#222;white-space:nowrap">Jacket</div>
<div class="a" style="left:638.78px;top:273.3px;width:10px;height:40px;writing-mode:vertical-rl;transform:rotate(180deg);text-align:right;font-size:8.8px;line-height:10px;color:#222;white-space:nowrap">Shirt</div>
<div class="t" style="left:382px;width:304px;text-align:center;top:313.5px;font-size:9.3px;color:#222">QTY</div>
<style>.b{-webkit-text-stroke:0.18px currentColor}</style>
<div class="a" style="left:31px;top:332px;width:984px;height:32.5px;background:#4A732E"></div>
<div class="t" style="left:31px;width:162.5px;text-align:center;top:341.75px;font-size:10.7px;font-weight:bold;color:#fff;letter-spacing:0.6px;line-height:13px">ITEM NAME</div>
<div class="t" style="left:193.5px;width:75.0px;text-align:center;top:341.75px;font-size:10.7px;font-weight:bold;color:#fff;letter-spacing:0.6px;line-height:13px">SKU</div>
<div class="t" style="left:268.5px;width:84.0px;text-align:center;top:341.75px;font-size:10.7px;font-weight:bold;color:#fff;letter-spacing:0.6px;line-height:13px">CATEGORY</div>
<div class="t" style="left:352.5px;width:56.0px;text-align:center;top:341.75px;font-size:10.7px;font-weight:bold;color:#fff;letter-spacing:0.6px;line-height:13px">SIZE</div>
<div class="t" style="left:408.5px;width:126.0px;text-align:center;top:341.75px;font-size:10.7px;font-weight:bold;color:#fff;letter-spacing:0.6px;line-height:13px">COLOR</div>
<div class="t" style="left:534.5px;width:65.0px;text-align:center;top:336.05px;font-size:10.7px;font-weight:bold;color:#fff;letter-spacing:0.6px;line-height:13px">QTY<br>IN STOCK</div>
<div class="t" style="left:599.5px;width:75.0px;text-align:center;top:341.75px;font-size:10.7px;font-weight:bold;color:#fff;letter-spacing:0.6px;line-height:13px">STATUS</div>
<div class="t" style="left:674.5px;width:75.5px;text-align:center;top:341.75px;font-size:10.7px;font-weight:bold;color:#fff;letter-spacing:0.6px;line-height:13px">COST PRICE</div>
<div class="t" style="left:750px;width:75px;text-align:center;top:336.05px;font-size:10.7px;font-weight:bold;color:#fff;letter-spacing:0.6px;line-height:13px">SELLING<br>PRICE</div>
<div class="t" style="left:825px;width:75.5px;text-align:center;top:336.05px;font-size:10.7px;font-weight:bold;color:#fff;letter-spacing:0.6px;line-height:13px">TOTAL<br>STOCK</div>
<div class="t" style="left:900.5px;width:75.0px;text-align:center;top:336.05px;font-size:10.7px;font-weight:bold;color:#fff;letter-spacing:0.6px;line-height:13px">REORDER<br>LEVEL</div>
<div class="t" style="left:985.5px;top:341.75px;font-size:10.7px;font-weight:bold;color:#fff;letter-spacing:0.5px;line-height:11.5px">SUPPLIER</div>
<div class="a" style="left:352.5px;top:364.5px;width:56.0px;height:16.200000000000024px;background:#FAE3A6"></div>
<div class="a" style="left:599.5px;top:364.5px;width:75.0px;height:16.200000000000024px;background:#BBD6AB"></div>
<div class="a" style="left:900.5px;top:364.5px;width:75.0px;height:16.200000000000024px;background:#F7D0CA"></div>
<div class="a" style="left:31px;top:379.6px;width:984px;height:1px;background:rgba(60,64,67,0.09)"></div>
<div class="t b" style="left:33.3px;top:368.8px;font-size:10px;letter-spacing:0.45px;color:#333">Classic Denim Jacket</div>
<div class="t b" style="left:196px;top:368.8px;font-size:10px;letter-spacing:0.05px;color:#333">SKU-1001</div>
<div class="t b" style="left:271px;top:368.8px;font-size:10px;letter-spacing:0.45px;color:#333">Jacket</div>
<svg style="left:341.9px;top:371.0px" width="6" height="3.0" viewBox="0 0 8 4"><path d="M0 0h8L4 4z" fill="#8a8a8a"/></svg>
<div class="t b" style="left:352.5px;width:40.0px;text-align:center;top:368.8px;font-size:10px;letter-spacing:0.45px;color:#5B4631">L</div>
<svg style="left:397.25px;top:370.7px" width="6.5" height="3.25" viewBox="0 0 8 4"><path d="M0 0h8L4 4z" fill="#7B5B33"/></svg>
<div class="t b" style="left:411px;top:368.8px;font-size:10px;letter-spacing:0.45px;color:#333">Blue</div>
<div class="t b" style="left:534.5px;width:65.0px;text-align:center;top:368.8px;font-size:10px;letter-spacing:0.05px;color:#333">15</div>
<div class="t b" style="left:599.5px;width:75.0px;text-align:center;top:368.8px;font-size:10px;letter-spacing:0.45px;color:#333">In Stock</div>
<div class="t b" style="left:674.5px;width:75.5px;text-align:center;top:368.8px;font-size:10px;letter-spacing:0.05px;color:#333">$30</div>
<div class="t b" style="left:750px;width:75px;text-align:center;top:368.8px;font-size:10px;letter-spacing:0.05px;color:#333">$50</div>
<div class="t b" style="left:825px;width:75.5px;text-align:center;top:368.8px;font-size:10px;letter-spacing:0.05px;color:#333">$450</div>
<div class="t b" style="left:903.5px;top:368.8px;font-size:10px;letter-spacing:0.45px;color:#C0432F">Low</div>
<svg style="left:964.4px;top:370.8px" width="6" height="3.0" viewBox="0 0 8 4"><path d="M0 0h8L4 4z" fill="#D04A35"/></svg>
<div class="t b" style="left:978px;top:368.8px;font-size:10px;letter-spacing:0.45px;color:#333;width:37px;overflow:hidden">Supplier A</div>
<div class="a" style="left:352.5px;top:380.1px;width:56.0px;height:16.200000000000024px;background:#F6C9AD"></div>
<div class="a" style="left:599.5px;top:380.1px;width:75.0px;height:16.200000000000024px;background:#E39D9C"></div>
<div class="a" style="left:900.5px;top:380.1px;width:75.0px;height:16.200000000000024px;background:#C9D9E1"></div>
<div class="a" style="left:31px;top:395.20000000000005px;width:984px;height:1px;background:rgba(60,64,67,0.09)"></div>
<div class="t b" style="left:33.3px;top:384.40000000000003px;font-size:10px;letter-spacing:0.45px;color:#333">Vintage Floral Maxi Dress</div>
<div class="t b" style="left:196px;top:384.40000000000003px;font-size:10px;letter-spacing:0.05px;color:#333">SKU-1002</div>
<div class="t b" style="left:271px;top:384.40000000000003px;font-size:10px;letter-spacing:0.45px;color:#333">Dress</div>
<svg style="left:341.9px;top:386.6px" width="6" height="3.0" viewBox="0 0 8 4"><path d="M0 0h8L4 4z" fill="#8a8a8a"/></svg>
<div class="t b" style="left:352.5px;width:40.0px;text-align:center;top:384.40000000000003px;font-size:10px;letter-spacing:0.45px;color:#7A4A32">M</div>
<svg style="left:397.25px;top:386.3px" width="6.5" height="3.25" viewBox="0 0 8 4"><path d="M0 0h8L4 4z" fill="#C0432F"/></svg>
<div class="t b" style="left:411px;top:384.40000000000003px;font-size:10px;letter-spacing:0.45px;color:#333">Pink</div>
<div class="t b" style="left:534.5px;width:65.0px;text-align:center;top:384.40000000000003px;font-size:10px;letter-spacing:0.05px;color:#333">5</div>
<div class="t b" style="left:599.5px;width:75.0px;text-align:center;top:384.40000000000003px;font-size:10px;letter-spacing:0.45px;color:#333">Low Stock</div>
<div class="t b" style="left:674.5px;width:75.5px;text-align:center;top:384.40000000000003px;font-size:10px;letter-spacing:0.05px;color:#333">$10</div>
<div class="t b" style="left:750px;width:75px;text-align:center;top:384.40000000000003px;font-size:10px;letter-spacing:0.05px;color:#333">$30</div>
<div class="t b" style="left:825px;width:75.5px;text-align:center;top:384.40000000000003px;font-size:10px;letter-spacing:0.05px;color:#333">$50</div>
<div class="t b" style="left:903.5px;top:384.40000000000003px;font-size:10px;letter-spacing:0.45px;color:#44699A">High</div>
<svg style="left:964.4px;top:386.40000000000003px" width="6" height="3.0" viewBox="0 0 8 4"><path d="M0 0h8L4 4z" fill="#7492B8"/></svg>
<div class="t b" style="left:978px;top:384.40000000000003px;font-size:10px;letter-spacing:0.45px;color:#333;width:37px;overflow:hidden">Supplier A</div>
<div class="a" style="left:352.5px;top:395.70000000000005px;width:56.0px;height:16.200000000000024px;background:#F7D0CA"></div>
<div class="a" style="left:599.5px;top:395.70000000000005px;width:75.0px;height:16.200000000000024px;background:#BBD6AB"></div>
<div class="a" style="left:900.5px;top:395.70000000000005px;width:75.0px;height:16.200000000000024px;background:#D7E9C4"></div>
<div class="a" style="left:31px;top:410.80000000000007px;width:984px;height:1px;background:rgba(60,64,67,0.09)"></div>
<div class="t b" style="left:33.3px;top:400.00000000000006px;font-size:10px;letter-spacing:0.45px;color:#333">Casual Chino Pants</div>
<div class="t b" style="left:196px;top:400.00000000000006px;font-size:10px;letter-spacing:0.05px;color:#333">SKU-1003</div>
<div class="t b" style="left:271px;top:400.00000000000006px;font-size:10px;letter-spacing:0.45px;color:#333">Pants</div>
<svg style="left:341.9px;top:402.20000000000005px" width="6" height="3.0" viewBox="0 0 8 4"><path d="M0 0h8L4 4z" fill="#8a8a8a"/></svg>
<div class="t b" style="left:352.5px;width:40.0px;text-align:center;top:400.00000000000006px;font-size:10px;letter-spacing:0.45px;color:#B83A2B">S</div>
<svg style="left:397.25px;top:401.90000000000003px" width="6.5" height="3.25" viewBox="0 0 8 4"><path d="M0 0h8L4 4z" fill="#C0432F"/></svg>
<div class="t b" style="left:411px;top:400.00000000000006px;font-size:10px;letter-spacing:0.45px;color:#333">Khaki</div>
<div class="t b" style="left:534.5px;width:65.0px;text-align:center;top:400.00000000000006px;font-size:10px;letter-spacing:0.05px;color:#333">10</div>
<div class="t b" style="left:599.5px;width:75.0px;text-align:center;top:400.00000000000006px;font-size:10px;letter-spacing:0.45px;color:#333">In Stock</div>
<div class="t b" style="left:674.5px;width:75.5px;text-align:center;top:400.00000000000006px;font-size:10px;letter-spacing:0.05px;color:#333">$80</div>
<div class="t b" style="left:750px;width:75px;text-align:center;top:400.00000000000006px;font-size:10px;letter-spacing:0.05px;color:#333">$100</div>
<div class="t b" style="left:825px;width:75.5px;text-align:center;top:400.00000000000006px;font-size:10px;letter-spacing:0.05px;color:#333">$800</div>
<div class="t b" style="left:903.5px;top:400.00000000000006px;font-size:10px;letter-spacing:0.45px;color:#3C7A4B">Medium</div>
<svg style="left:964.4px;top:402.00000000000006px" width="6" height="3.0" viewBox="0 0 8 4"><path d="M0 0h8L4 4z" fill="#4E8A4F"/></svg>
<div class="t b" style="left:978px;top:400.00000000000006px;font-size:10px;letter-spacing:0.45px;color:#333;width:37px;overflow:hidden">Supplier A</div>
<div class="a" style="left:352.5px;top:411.30000000000007px;width:56.0px;height:16.200000000000024px;background:#F7D0CA"></div>
<div class="a" style="left:599.5px;top:411.30000000000007px;width:75.0px;height:16.200000000000024px;background:#E39D9C"></div>
<div class="a" style="left:900.5px;top:411.30000000000007px;width:75.0px;height:16.200000000000024px;background:#C9D9E1"></div>
<div class="a" style="left:31px;top:426.4000000000001px;width:984px;height:1px;background:rgba(60,64,67,0.09)"></div>
<div class="t b" style="left:33.3px;top:415.6000000000001px;font-size:10px;letter-spacing:0.45px;color:#333">Lightweight Bomber Jacket</div>
<div class="t b" style="left:196px;top:415.6000000000001px;font-size:10px;letter-spacing:0.05px;color:#333">SKU-1004</div>
<div class="t b" style="left:271px;top:415.6000000000001px;font-size:10px;letter-spacing:0.45px;color:#333">Jacket</div>
<svg style="left:341.9px;top:417.80000000000007px" width="6" height="3.0" viewBox="0 0 8 4"><path d="M0 0h8L4 4z" fill="#8a8a8a"/></svg>
<div class="t b" style="left:352.5px;width:40.0px;text-align:center;top:415.6000000000001px;font-size:10px;letter-spacing:0.45px;color:#B83A2B">S</div>
<svg style="left:397.25px;top:417.50000000000006px" width="6.5" height="3.25" viewBox="0 0 8 4"><path d="M0 0h8L4 4z" fill="#C0432F"/></svg>
<div class="t b" style="left:411px;top:415.6000000000001px;font-size:10px;letter-spacing:0.45px;color:#333">Green</div>
<div class="t b" style="left:534.5px;width:65.0px;text-align:center;top:415.6000000000001px;font-size:10px;letter-spacing:0.05px;color:#333">4</div>
<div class="t b" style="left:599.5px;width:75.0px;text-align:center;top:415.6000000000001px;font-size:10px;letter-spacing:0.45px;color:#333">Low Stock</div>
<div class="t b" style="left:674.5px;width:75.5px;text-align:center;top:415.6000000000001px;font-size:10px;letter-spacing:0.05px;color:#333">$60</div>
<div class="t b" style="left:750px;width:75px;text-align:center;top:415.6000000000001px;font-size:10px;letter-spacing:0.05px;color:#333">$80</div>
<div class="t b" style="left:825px;width:75.5px;text-align:center;top:415.6000000000001px;font-size:10px;letter-spacing:0.05px;color:#333">$240</div>
<div class="t b" style="left:903.5px;top:415.6000000000001px;font-size:10px;letter-spacing:0.45px;color:#44699A">High</div>
<svg style="left:964.4px;top:417.6000000000001px" width="6" height="3.0" viewBox="0 0 8 4"><path d="M0 0h8L4 4z" fill="#7492B8"/></svg>
<div class="t b" style="left:978px;top:415.6000000000001px;font-size:10px;letter-spacing:0.45px;color:#333;width:37px;overflow:hidden">Supplier A</div>
<div class="a" style="left:352.5px;top:426.9000000000001px;width:56.0px;height:16.200000000000024px;background:#D6E9C5"></div>
<div class="a" style="left:599.5px;top:426.9000000000001px;width:75.0px;height:16.200000000000024px;background:#BBD6AB"></div>
<div class="a" style="left:900.5px;top:426.9000000000001px;width:75.0px;height:16.200000000000024px;background:#D7E9C4"></div>
<div class="a" style="left:31px;top:442.0000000000001px;width:984px;height:1px;background:rgba(60,64,67,0.09)"></div>
<div class="t b" style="left:33.3px;top:431.2000000000001px;font-size:10px;letter-spacing:0.45px;color:#333">Relaxed Fit Graphic Tee</div>
<div class="t b" style="left:196px;top:431.2000000000001px;font-size:10px;letter-spacing:0.05px;color:#333">SKU-1005</div>
<div class="t b" style="left:271px;top:431.2000000000001px;font-size:10px;letter-spacing:0.45px;color:#333">T-Shirt</div>
<svg style="left:341.9px;top:433.4000000000001px" width="6" height="3.0" viewBox="0 0 8 4"><path d="M0 0h8L4 4z" fill="#8a8a8a"/></svg>
<div class="t b" style="left:352.5px;width:40.0px;text-align:center;top:431.2000000000001px;font-size:10px;letter-spacing:0.45px;color:#3C7A4B">XL</div>
<svg style="left:397.25px;top:433.1000000000001px" width="6.5" height="3.25" viewBox="0 0 8 4"><path d="M0 0h8L4 4z" fill="#3C7A4B"/></svg>
<div class="t b" style="left:411px;top:431.2000000000001px;font-size:10px;letter-spacing:0.45px;color:#333">Gray</div>
<div class="t b" style="left:534.5px;width:65.0px;text-align:center;top:431.2000000000001px;font-size:10px;letter-spacing:0.05px;color:#333">6</div>
<div class="t b" style="left:599.5px;width:75.0px;text-align:center;top:431.2000000000001px;font-size:10px;letter-spacing:0.45px;color:#333">In Stock</div>
<div class="t b" style="left:674.5px;width:75.5px;text-align:center;top:431.2000000000001px;font-size:10px;letter-spacing:0.05px;color:#333">$5</div>
<div class="t b" style="left:750px;width:75px;text-align:center;top:431.2000000000001px;font-size:10px;letter-spacing:0.05px;color:#333">$25</div>
<div class="t b" style="left:825px;width:75.5px;text-align:center;top:431.2000000000001px;font-size:10px;letter-spacing:0.05px;color:#333">$30</div>
<div class="t b" style="left:903.5px;top:431.2000000000001px;font-size:10px;letter-spacing:0.45px;color:#3C7A4B">Medium</div>
<svg style="left:964.4px;top:433.2000000000001px" width="6" height="3.0" viewBox="0 0 8 4"><path d="M0 0h8L4 4z" fill="#4E8A4F"/></svg>
<div class="t b" style="left:978px;top:431.2000000000001px;font-size:10px;letter-spacing:0.45px;color:#333;width:37px;overflow:hidden">Supplier A</div>
<div class="a" style="left:352.5px;top:442.5000000000001px;width:56.0px;height:16.200000000000024px;background:#D6E9C5"></div>
<div class="a" style="left:599.5px;top:442.5000000000001px;width:75.0px;height:16.200000000000024px;background:#BBD6AB"></div>
<div class="a" style="left:900.5px;top:442.5000000000001px;width:75.0px;height:16.200000000000024px;background:#D7E9C4"></div>
<div class="a" style="left:31px;top:457.60000000000014px;width:984px;height:1px;background:rgba(60,64,67,0.09)"></div>
<div class="t b" style="left:33.3px;top:446.8000000000001px;font-size:10px;letter-spacing:0.45px;color:#333">High-Waisted Black Leggings</div>
<div class="t b" style="left:196px;top:446.8000000000001px;font-size:10px;letter-spacing:0.05px;color:#333">SKU-1006</div>
<div class="t b" style="left:271px;top:446.8000000000001px;font-size:10px;letter-spacing:0.45px;color:#333">Leggings</div>
<svg style="left:341.9px;top:449.0000000000001px" width="6" height="3.0" viewBox="0 0 8 4"><path d="M0 0h8L4 4z" fill="#8a8a8a"/></svg>
<div class="t b" style="left:352.5px;width:40.0px;text-align:center;top:446.8000000000001px;font-size:10px;letter-spacing:0.45px;color:#3C7A4B">XL</div>
<svg style="left:397.25px;top:448.7000000000001px" width="6.5" height="3.25" viewBox="0 0 8 4"><path d="M0 0h8L4 4z" fill="#3C7A4B"/></svg>
<div class="t b" style="left:411px;top:446.8000000000001px;font-size:10px;letter-spacing:0.45px;color:#333">Jet Black</div>
<div class="t b" style="left:534.5px;width:65.0px;text-align:center;top:446.8000000000001px;font-size:10px;letter-spacing:0.05px;color:#333">8</div>
<div class="t b" style="left:599.5px;width:75.0px;text-align:center;top:446.8000000000001px;font-size:10px;letter-spacing:0.45px;color:#333">In Stock</div>
<div class="t b" style="left:674.5px;width:75.5px;text-align:center;top:446.8000000000001px;font-size:10px;letter-spacing:0.05px;color:#333">$10</div>
<div class="t b" style="left:750px;width:75px;text-align:center;top:446.8000000000001px;font-size:10px;letter-spacing:0.05px;color:#333">$30</div>
<div class="t b" style="left:825px;width:75.5px;text-align:center;top:446.8000000000001px;font-size:10px;letter-spacing:0.05px;color:#333">$80</div>
<div class="t b" style="left:903.5px;top:446.8000000000001px;font-size:10px;letter-spacing:0.45px;color:#3C7A4B">Medium</div>
<svg style="left:964.4px;top:448.8000000000001px" width="6" height="3.0" viewBox="0 0 8 4"><path d="M0 0h8L4 4z" fill="#4E8A4F"/></svg>
<div class="t b" style="left:978px;top:446.8000000000001px;font-size:10px;letter-spacing:0.45px;color:#333;width:37px;overflow:hidden">Supplier A</div>
<div class="a" style="left:352.5px;top:458.10000000000014px;width:56.0px;height:16.200000000000024px;background:#C4DDF3"></div>
<div class="a" style="left:599.5px;top:458.10000000000014px;width:75.0px;height:16.200000000000024px;background:#BBD6AB"></div>
<div class="a" style="left:900.5px;top:458.10000000000014px;width:75.0px;height:16.200000000000024px;background:#F7D0CA"></div>
<div class="a" style="left:31px;top:473.20000000000016px;width:984px;height:1px;background:rgba(60,64,67,0.09)"></div>
<div class="t b" style="left:33.3px;top:462.40000000000015px;font-size:10px;letter-spacing:0.45px;color:#333">Striped Boat Neck Top</div>
<div class="t b" style="left:196px;top:462.40000000000015px;font-size:10px;letter-spacing:0.05px;color:#333">SKU-1007</div>
<div class="t b" style="left:271px;top:462.40000000000015px;font-size:10px;letter-spacing:0.45px;color:#333">Top</div>
<svg style="left:341.9px;top:464.60000000000014px" width="6" height="3.0" viewBox="0 0 8 4"><path d="M0 0h8L4 4z" fill="#8a8a8a"/></svg>
<div class="t b" style="left:352.5px;width:40.0px;text-align:center;top:462.40000000000015px;font-size:10px;letter-spacing:0.45px;color:#3C70C0">XXL</div>
<svg style="left:397.25px;top:464.3000000000001px" width="6.5" height="3.25" viewBox="0 0 8 4"><path d="M0 0h8L4 4z" fill="#3566B0"/></svg>
<div class="t b" style="left:411px;top:462.40000000000015px;font-size:10px;letter-spacing:0.45px;color:#333">Navy and White Stripes</div>
<div class="t b" style="left:534.5px;width:65.0px;text-align:center;top:462.40000000000015px;font-size:10px;letter-spacing:0.05px;color:#333">10</div>
<div class="t b" style="left:599.5px;width:75.0px;text-align:center;top:462.40000000000015px;font-size:10px;letter-spacing:0.45px;color:#333">In Stock</div>
<div class="t b" style="left:674.5px;width:75.5px;text-align:center;top:462.40000000000015px;font-size:10px;letter-spacing:0.05px;color:#333">$55</div>
<div class="t b" style="left:750px;width:75px;text-align:center;top:462.40000000000015px;font-size:10px;letter-spacing:0.05px;color:#333">$75</div>
<div class="t b" style="left:825px;width:75.5px;text-align:center;top:462.40000000000015px;font-size:10px;letter-spacing:0.05px;color:#333">$550</div>
<div class="t b" style="left:903.5px;top:462.40000000000015px;font-size:10px;letter-spacing:0.45px;color:#C0432F">Low</div>
<svg style="left:964.4px;top:464.40000000000015px" width="6" height="3.0" viewBox="0 0 8 4"><path d="M0 0h8L4 4z" fill="#D04A35"/></svg>
<div class="t b" style="left:978px;top:462.40000000000015px;font-size:10px;letter-spacing:0.45px;color:#333;width:37px;overflow:hidden">Supplier A</div>
<div class="a" style="left:352.5px;top:473.70000000000016px;width:56.0px;height:16.200000000000024px;background:#C4DDF3"></div>
<div class="a" style="left:599.5px;top:473.70000000000016px;width:75.0px;height:16.200000000000024px;background:#BBD6AB"></div>
<div class="a" style="left:900.5px;top:473.70000000000016px;width:75.0px;height:16.200000000000024px;background:#F7D0CA"></div>
<div class="a" style="left:31px;top:488.8000000000002px;width:984px;height:1px;background:rgba(60,64,67,0.09)"></div>
<div class="t b" style="left:33.3px;top:478.00000000000017px;font-size:10px;letter-spacing:0.45px;color:#333">Cozy Knit Sweater</div>
<div class="t b" style="left:196px;top:478.00000000000017px;font-size:10px;letter-spacing:0.05px;color:#333">SKU-1008</div>
<div class="t b" style="left:271px;top:478.00000000000017px;font-size:10px;letter-spacing:0.45px;color:#333">Sweater</div>
<svg style="left:341.9px;top:480.20000000000016px" width="6" height="3.0" viewBox="0 0 8 4"><path d="M0 0h8L4 4z" fill="#8a8a8a"/></svg>
<div class="t b" style="left:352.5px;width:40.0px;text-align:center;top:478.00000000000017px;font-size:10px;letter-spacing:0.45px;color:#3C70C0">XXL</div>
<svg style="left:397.25px;top:479.90000000000015px" width="6.5" height="3.25" viewBox="0 0 8 4"><path d="M0 0h8L4 4z" fill="#3566B0"/></svg>
<div class="t b" style="left:411px;top:478.00000000000017px;font-size:10px;letter-spacing:0.45px;color:#333">Red</div>
<div class="t b" style="left:534.5px;width:65.0px;text-align:center;top:478.00000000000017px;font-size:10px;letter-spacing:0.05px;color:#333">15</div>
<div class="t b" style="left:599.5px;width:75.0px;text-align:center;top:478.00000000000017px;font-size:10px;letter-spacing:0.45px;color:#333">In Stock</div>
<div class="t b" style="left:674.5px;width:75.5px;text-align:center;top:478.00000000000017px;font-size:10px;letter-spacing:0.05px;color:#333">$60</div>
<div class="t b" style="left:750px;width:75px;text-align:center;top:478.00000000000017px;font-size:10px;letter-spacing:0.05px;color:#333">$80</div>
<div class="t b" style="left:825px;width:75.5px;text-align:center;top:478.00000000000017px;font-size:10px;letter-spacing:0.05px;color:#333">$900</div>
<div class="t b" style="left:903.5px;top:478.00000000000017px;font-size:10px;letter-spacing:0.45px;color:#C0432F">Low</div>
<svg style="left:964.4px;top:480.00000000000017px" width="6" height="3.0" viewBox="0 0 8 4"><path d="M0 0h8L4 4z" fill="#D04A35"/></svg>
<div class="t b" style="left:978px;top:478.00000000000017px;font-size:10px;letter-spacing:0.45px;color:#333;width:37px;overflow:hidden">Supplier A</div>
<div class="a" style="left:352.5px;top:489.3000000000002px;width:56.0px;height:16.200000000000024px;background:#F6C9AD"></div>
<div class="a" style="left:599.5px;top:489.3000000000002px;width:75.0px;height:16.200000000000024px;background:#BBD6AB"></div>
<div class="a" style="left:900.5px;top:489.3000000000002px;width:75.0px;height:16.200000000000024px;background:#F7D0CA"></div>
<div class="a" style="left:31px;top:504.4000000000002px;width:984px;height:1px;background:rgba(60,64,67,0.09)"></div>
<div class="t b" style="left:33.3px;top:493.6000000000002px;font-size:10px;letter-spacing:0.45px;color:#333">Tailored Blazer</div>
<div class="t b" style="left:196px;top:493.6000000000002px;font-size:10px;letter-spacing:0.05px;color:#333">SKU-1009</div>
<div class="t b" style="left:271px;top:493.6000000000002px;font-size:10px;letter-spacing:0.45px;color:#333">Blazer</div>
<svg style="left:341.9px;top:495.8000000000002px" width="6" height="3.0" viewBox="0 0 8 4"><path d="M0 0h8L4 4z" fill="#8a8a8a"/></svg>
<div class="t b" style="left:352.5px;width:40.0px;text-align:center;top:493.6000000000002px;font-size:10px;letter-spacing:0.45px;color:#7A4A32">M</div>
<svg style="left:397.25px;top:495.50000000000017px" width="6.5" height="3.25" viewBox="0 0 8 4"><path d="M0 0h8L4 4z" fill="#C0432F"/></svg>
<div class="t b" style="left:411px;top:493.6000000000002px;font-size:10px;letter-spacing:0.45px;color:#333">Deep Navy</div>
<div class="t b" style="left:534.5px;width:65.0px;text-align:center;top:493.6000000000002px;font-size:10px;letter-spacing:0.05px;color:#333">20</div>
<div class="t b" style="left:599.5px;width:75.0px;text-align:center;top:493.6000000000002px;font-size:10px;letter-spacing:0.45px;color:#333">In Stock</div>
<div class="t b" style="left:674.5px;width:75.5px;text-align:center;top:493.6000000000002px;font-size:10px;letter-spacing:0.05px;color:#333">$40</div>
<div class="t b" style="left:750px;width:75px;text-align:center;top:493.6000000000002px;font-size:10px;letter-spacing:0.05px;color:#333">$60</div>
<div class="t b" style="left:825px;width:75.5px;text-align:center;top:493.6000000000002px;font-size:10px;letter-spacing:0.05px;color:#333">$800</div>
<div class="t b" style="left:903.5px;top:493.6000000000002px;font-size:10px;letter-spacing:0.45px;color:#C0432F">Low</div>
<svg style="left:964.4px;top:495.6000000000002px" width="6" height="3.0" viewBox="0 0 8 4"><path d="M0 0h8L4 4z" fill="#D04A35"/></svg>
<div class="t b" style="left:978px;top:493.6000000000002px;font-size:10px;letter-spacing:0.45px;color:#333;width:37px;overflow:hidden">Supplier A</div>
<div class="a" style="left:352.5px;top:504.9000000000002px;width:56.0px;height:16.200000000000024px;background:#FAE3A6"></div>
<div class="a" style="left:599.5px;top:504.9000000000002px;width:75.0px;height:16.200000000000024px;background:#BBD6AB"></div>
<div class="a" style="left:900.5px;top:504.9000000000002px;width:75.0px;height:16.200000000000024px;background:#F7D0CA"></div>
<div class="a" style="left:31px;top:520.0000000000002px;width:984px;height:1px;background:rgba(60,64,67,0.09)"></div>
<div class="t b" style="left:33.3px;top:509.2000000000002px;font-size:10px;letter-spacing:0.45px;color:#333">Flowy A-Line Skirt</div>
<div class="t b" style="left:196px;top:509.2000000000002px;font-size:10px;letter-spacing:0.05px;color:#333">SKU-1010</div>
<div class="t b" style="left:271px;top:509.2000000000002px;font-size:10px;letter-spacing:0.45px;color:#333">Skirt</div>
<svg style="left:341.9px;top:511.40000000000026px" width="6" height="3.0" viewBox="0 0 8 4"><path d="M0 0h8L4 4z" fill="#8a8a8a"/></svg>
<div class="t b" style="left:352.5px;width:40.0px;text-align:center;top:509.2000000000002px;font-size:10px;letter-spacing:0.45px;color:#5B4631">L</div>
<svg style="left:397.25px;top:511.10000000000025px" width="6.5" height="3.25" viewBox="0 0 8 4"><path d="M0 0h8L4 4z" fill="#7B5B33"/></svg>
<div class="t b" style="left:411px;top:509.2000000000002px;font-size:10px;letter-spacing:0.45px;color:#333">Lavender</div>
<div class="t b" style="left:534.5px;width:65.0px;text-align:center;top:509.2000000000002px;font-size:10px;letter-spacing:0.05px;color:#333">25</div>
<div class="t b" style="left:599.5px;width:75.0px;text-align:center;top:509.2000000000002px;font-size:10px;letter-spacing:0.45px;color:#333">In Stock</div>
<div class="t b" style="left:674.5px;width:75.5px;text-align:center;top:509.2000000000002px;font-size:10px;letter-spacing:0.05px;color:#333">$30</div>
<div class="t b" style="left:750px;width:75px;text-align:center;top:509.2000000000002px;font-size:10px;letter-spacing:0.05px;color:#333">$50</div>
<div class="t b" style="left:825px;width:75.5px;text-align:center;top:509.2000000000002px;font-size:10px;letter-spacing:0.05px;color:#333">$750</div>
<div class="t b" style="left:903.5px;top:509.2000000000002px;font-size:10px;letter-spacing:0.45px;color:#C0432F">Low</div>
<svg style="left:964.4px;top:511.2000000000003px" width="6" height="3.0" viewBox="0 0 8 4"><path d="M0 0h8L4 4z" fill="#D04A35"/></svg>
<div class="t b" style="left:978px;top:509.2000000000002px;font-size:10px;letter-spacing:0.45px;color:#333;width:37px;overflow:hidden">Supplier A</div>
<div class="a" style="left:352.5px;top:520.5000000000002px;width:56.0px;height:16.200000000000024px;background:#FAE3A6"></div>
<div class="a" style="left:599.5px;top:520.5000000000002px;width:75.0px;height:16.200000000000024px;background:#E39D9C"></div>
<div class="a" style="left:900.5px;top:520.5000000000002px;width:75.0px;height:16.200000000000024px;background:#C9D9E1"></div>
<div class="a" style="left:31px;top:535.6000000000003px;width:984px;height:1px;background:rgba(60,64,67,0.09)"></div>
<div class="t b" style="left:33.3px;top:524.8000000000002px;font-size:10px;letter-spacing:0.45px;color:#333">Sporty Zip-Up Hoodie</div>
<div class="t b" style="left:196px;top:524.8000000000002px;font-size:10px;letter-spacing:0.05px;color:#333">SKU-1011</div>
<div class="t b" style="left:271px;top:524.8000000000002px;font-size:10px;letter-spacing:0.45px;color:#333">Hoodie</div>
<svg style="left:341.9px;top:527.0000000000002px" width="6" height="3.0" viewBox="0 0 8 4"><path d="M0 0h8L4 4z" fill="#8a8a8a"/></svg>
<div class="t b" style="left:352.5px;width:40.0px;text-align:center;top:524.8000000000002px;font-size:10px;letter-spacing:0.45px;color:#5B4631">L</div>
<svg style="left:397.25px;top:526.7000000000002px" width="6.5" height="3.25" viewBox="0 0 8 4"><path d="M0 0h8L4 4z" fill="#7B5B33"/></svg>
<div class="t b" style="left:411px;top:524.8000000000002px;font-size:10px;letter-spacing:0.45px;color:#333">Blue</div>
<div class="t b" style="left:534.5px;width:65.0px;text-align:center;top:524.8000000000002px;font-size:10px;letter-spacing:0.05px;color:#333">5</div>
<div class="t b" style="left:599.5px;width:75.0px;text-align:center;top:524.8000000000002px;font-size:10px;letter-spacing:0.45px;color:#333">Low Stock</div>
<div class="t b" style="left:674.5px;width:75.5px;text-align:center;top:524.8000000000002px;font-size:10px;letter-spacing:0.05px;color:#333">$10</div>
<div class="t b" style="left:750px;width:75px;text-align:center;top:524.8000000000002px;font-size:10px;letter-spacing:0.05px;color:#333">$30</div>
<div class="t b" style="left:825px;width:75.5px;text-align:center;top:524.8000000000002px;font-size:10px;letter-spacing:0.05px;color:#333">$50</div>
<div class="t b" style="left:903.5px;top:524.8000000000002px;font-size:10px;letter-spacing:0.45px;color:#44699A">High</div>
<svg style="left:964.4px;top:526.8000000000002px" width="6" height="3.0" viewBox="0 0 8 4"><path d="M0 0h8L4 4z" fill="#7492B8"/></svg>
<div class="t b" style="left:978px;top:524.8000000000002px;font-size:10px;letter-spacing:0.45px;color:#333;width:37px;overflow:hidden">Supplier A</div>
<div class="a" style="left:352.5px;top:536.1000000000003px;width:56.0px;height:16.200000000000024px;background:#D6E9C5"></div>
<div class="a" style="left:599.5px;top:536.1000000000003px;width:75.0px;height:16.200000000000024px;background:#BBD6AB"></div>
<div class="a" style="left:900.5px;top:536.1000000000003px;width:75.0px;height:16.200000000000024px;background:#D7E9C4"></div>
<div class="a" style="left:31px;top:551.2000000000003px;width:984px;height:1px;background:rgba(60,64,67,0.09)"></div>
<div class="t b" style="left:33.3px;top:540.4000000000002px;font-size:10px;letter-spacing:0.45px;color:#333">Elegant Evening Gown</div>
<div class="t b" style="left:196px;top:540.4000000000002px;font-size:10px;letter-spacing:0.05px;color:#333">SKU-1012</div>
<div class="t b" style="left:271px;top:540.4000000000002px;font-size:10px;letter-spacing:0.45px;color:#333">Dress</div>
<svg style="left:341.9px;top:542.6000000000004px" width="6" height="3.0" viewBox="0 0 8 4"><path d="M0 0h8L4 4z" fill="#8a8a8a"/></svg>
<div class="t b" style="left:352.5px;width:40.0px;text-align:center;top:540.4000000000002px;font-size:10px;letter-spacing:0.45px;color:#3C7A4B">XL</div>
<svg style="left:397.25px;top:542.3000000000003px" width="6.5" height="3.25" viewBox="0 0 8 4"><path d="M0 0h8L4 4z" fill="#3C7A4B"/></svg>
<div class="t b" style="left:411px;top:540.4000000000002px;font-size:10px;letter-spacing:0.45px;color:#333">Green</div>
<div class="t b" style="left:534.5px;width:65.0px;text-align:center;top:540.4000000000002px;font-size:10px;letter-spacing:0.05px;color:#333">10</div>
<div class="t b" style="left:599.5px;width:75.0px;text-align:center;top:540.4000000000002px;font-size:10px;letter-spacing:0.45px;color:#333">In Stock</div>
<div class="t b" style="left:674.5px;width:75.5px;text-align:center;top:540.4000000000002px;font-size:10px;letter-spacing:0.05px;color:#333">$80</div>
<div class="t b" style="left:750px;width:75px;text-align:center;top:540.4000000000002px;font-size:10px;letter-spacing:0.05px;color:#333">$100</div>
<div class="t b" style="left:825px;width:75.5px;text-align:center;top:540.4000000000002px;font-size:10px;letter-spacing:0.05px;color:#333">$800</div>
<div class="t b" style="left:903.5px;top:540.4000000000002px;font-size:10px;letter-spacing:0.45px;color:#3C7A4B">Medium</div>
<svg style="left:964.4px;top:542.4000000000003px" width="6" height="3.0" viewBox="0 0 8 4"><path d="M0 0h8L4 4z" fill="#4E8A4F"/></svg>
<div class="t b" style="left:978px;top:540.4000000000002px;font-size:10px;letter-spacing:0.45px;color:#333;width:37px;overflow:hidden">Supplier A</div>
<div class="a" style="left:352.5px;top:551.7000000000003px;width:56.0px;height:16.200000000000024px;background:#D6E9C5"></div>
<div class="a" style="left:599.5px;top:551.7000000000003px;width:75.0px;height:16.200000000000024px;background:#E39D9C"></div>
<div class="a" style="left:900.5px;top:551.7000000000003px;width:75.0px;height:16.200000000000024px;background:#C9D9E1"></div>
<div class="a" style="left:31px;top:566.8000000000003px;width:984px;height:1px;background:rgba(60,64,67,0.09)"></div>
<div class="t b" style="left:33.3px;top:556.0000000000002px;font-size:10px;letter-spacing:0.45px;color:#333">Soft Cotton Tank Top</div>
<div class="t b" style="left:196px;top:556.0000000000002px;font-size:10px;letter-spacing:0.05px;color:#333">SKU-1013</div>
<div class="t b" style="left:271px;top:556.0000000000002px;font-size:10px;letter-spacing:0.45px;color:#333">Top</div>
<svg style="left:341.9px;top:558.2000000000003px" width="6" height="3.0" viewBox="0 0 8 4"><path d="M0 0h8L4 4z" fill="#8a8a8a"/></svg>
<div class="t b" style="left:352.5px;width:40.0px;text-align:center;top:556.0000000000002px;font-size:10px;letter-spacing:0.45px;color:#3C7A4B">XL</div>
<svg style="left:397.25px;top:557.9000000000002px" width="6.5" height="3.25" viewBox="0 0 8 4"><path d="M0 0h8L4 4z" fill="#3C7A4B"/></svg>
<div class="t b" style="left:411px;top:556.0000000000002px;font-size:10px;letter-spacing:0.45px;color:#333">Yellow</div>
<div class="t b" style="left:534.5px;width:65.0px;text-align:center;top:556.0000000000002px;font-size:10px;letter-spacing:0.05px;color:#333">5</div>
<div class="t b" style="left:599.5px;width:75.0px;text-align:center;top:556.0000000000002px;font-size:10px;letter-spacing:0.45px;color:#333">Low Stock</div>
<div class="t b" style="left:674.5px;width:75.5px;text-align:center;top:556.0000000000002px;font-size:10px;letter-spacing:0.05px;color:#333">$60</div>
<div class="t b" style="left:750px;width:75px;text-align:center;top:556.0000000000002px;font-size:10px;letter-spacing:0.05px;color:#333">$80</div>
<div class="t b" style="left:825px;width:75.5px;text-align:center;top:556.0000000000002px;font-size:10px;letter-spacing:0.05px;color:#333">$300</div>
<div class="t b" style="left:903.5px;top:556.0000000000002px;font-size:10px;letter-spacing:0.45px;color:#44699A">High</div>
<svg style="left:964.4px;top:558.0000000000002px" width="6" height="3.0" viewBox="0 0 8 4"><path d="M0 0h8L4 4z" fill="#7492B8"/></svg>
<div class="t b" style="left:978px;top:556.0000000000002px;font-size:10px;letter-spacing:0.45px;color:#333;width:37px;overflow:hidden">Supplier A</div>
<div class="a" style="left:352.5px;top:567.3000000000003px;width:56.0px;height:16.200000000000024px;background:#F6C9AD"></div>
<div class="a" style="left:599.5px;top:567.3000000000003px;width:75.0px;height:16.200000000000024px;background:#E39D9C"></div>
<div class="a" style="left:900.5px;top:567.3000000000003px;width:75.0px;height:16.200000000000024px;background:#C9D9E1"></div>
<div class="a" style="left:31px;top:582.4000000000003px;width:984px;height:1px;background:rgba(60,64,67,0.09)"></div>
<div class="t b" style="left:33.3px;top:571.6000000000003px;font-size:10px;letter-spacing:0.45px;color:#333">Printed Wide-Leg Trousers</div>
<div class="t b" style="left:196px;top:571.6000000000003px;font-size:10px;letter-spacing:0.05px;color:#333">SKU-1014</div>
<div class="t b" style="left:271px;top:571.6000000000003px;font-size:10px;letter-spacing:0.45px;color:#333">Trouser</div>
<svg style="left:341.9px;top:573.8000000000004px" width="6" height="3.0" viewBox="0 0 8 4"><path d="M0 0h8L4 4z" fill="#8a8a8a"/></svg>
<div class="t b" style="left:352.5px;width:40.0px;text-align:center;top:571.6000000000003px;font-size:10px;letter-spacing:0.45px;color:#7A4A32">M</div>
<svg style="left:397.25px;top:573.5000000000003px" width="6.5" height="3.25" viewBox="0 0 8 4"><path d="M0 0h8L4 4z" fill="#C0432F"/></svg>
<div class="t b" style="left:411px;top:571.6000000000003px;font-size:10px;letter-spacing:0.45px;color:#333">Abstract Multicolor</div>
<div class="t b" style="left:534.5px;width:65.0px;text-align:center;top:571.6000000000003px;font-size:10px;letter-spacing:0.05px;color:#333">4</div>
<div class="t b" style="left:599.5px;width:75.0px;text-align:center;top:571.6000000000003px;font-size:10px;letter-spacing:0.45px;color:#333">Low Stock</div>
<div class="t b" style="left:674.5px;width:75.5px;text-align:center;top:571.6000000000003px;font-size:10px;letter-spacing:0.05px;color:#333">$5</div>
<div class="t b" style="left:750px;width:75px;text-align:center;top:571.6000000000003px;font-size:10px;letter-spacing:0.05px;color:#333">$25</div>
<div class="t b" style="left:825px;width:75.5px;text-align:center;top:571.6000000000003px;font-size:10px;letter-spacing:0.05px;color:#333">$20</div>
<div class="t b" style="left:903.5px;top:571.6000000000003px;font-size:10px;letter-spacing:0.45px;color:#44699A">High</div>
<svg style="left:964.4px;top:573.6000000000004px" width="6" height="3.0" viewBox="0 0 8 4"><path d="M0 0h8L4 4z" fill="#7492B8"/></svg>
<div class="t b" style="left:978px;top:571.6000000000003px;font-size:10px;letter-spacing:0.45px;color:#333;width:37px;overflow:hidden">Supplier A</div>
<div class="a" style="left:352.5px;top:582.9000000000003px;width:56.0px;height:16.200000000000024px;background:#D6E9C5"></div>
<div class="a" style="left:599.5px;top:582.9000000000003px;width:75.0px;height:16.200000000000024px;background:#BBD6AB"></div>
<div class="a" style="left:900.5px;top:582.9000000000003px;width:75.0px;height:16.200000000000024px;background:#D7E9C4"></div>
<div class="a" style="left:31px;top:598.0000000000003px;width:984px;height:1px;background:rgba(60,64,67,0.09)"></div>
<div class="t b" style="left:33.3px;top:587.2000000000003px;font-size:10px;letter-spacing:0.45px;color:#333">Chic Wrap Dress</div>
<div class="t b" style="left:196px;top:587.2000000000003px;font-size:10px;letter-spacing:0.05px;color:#333">SKU-1015</div>
<div class="t b" style="left:271px;top:587.2000000000003px;font-size:10px;letter-spacing:0.45px;color:#333">Dress</div>
<svg style="left:341.9px;top:589.4000000000003px" width="6" height="3.0" viewBox="0 0 8 4"><path d="M0 0h8L4 4z" fill="#8a8a8a"/></svg>
<div class="t b" style="left:352.5px;width:40.0px;text-align:center;top:587.2000000000003px;font-size:10px;letter-spacing:0.45px;color:#3C7A4B">XL</div>
<svg style="left:397.25px;top:589.1000000000003px" width="6.5" height="3.25" viewBox="0 0 8 4"><path d="M0 0h8L4 4z" fill="#3C7A4B"/></svg>
<div class="t b" style="left:411px;top:587.2000000000003px;font-size:10px;letter-spacing:0.45px;color:#333">Orange</div>
<div class="t b" style="left:534.5px;width:65.0px;text-align:center;top:587.2000000000003px;font-size:10px;letter-spacing:0.05px;color:#333">9</div>
<div class="t b" style="left:599.5px;width:75.0px;text-align:center;top:587.2000000000003px;font-size:10px;letter-spacing:0.45px;color:#333">In Stock</div>
<div class="t b" style="left:674.5px;width:75.5px;text-align:center;top:587.2000000000003px;font-size:10px;letter-spacing:0.05px;color:#333">$10</div>
<div class="t b" style="left:750px;width:75px;text-align:center;top:587.2000000000003px;font-size:10px;letter-spacing:0.05px;color:#333">$30</div>
<div class="t b" style="left:825px;width:75.5px;text-align:center;top:587.2000000000003px;font-size:10px;letter-spacing:0.05px;color:#333">$90</div>
<div class="t b" style="left:903.5px;top:587.2000000000003px;font-size:10px;letter-spacing:0.45px;color:#3C7A4B">Medium</div>
<svg style="left:964.4px;top:589.2000000000003px" width="6" height="3.0" viewBox="0 0 8 4"><path d="M0 0h8L4 4z" fill="#4E8A4F"/></svg>
<div class="t b" style="left:978px;top:587.2000000000003px;font-size:10px;letter-spacing:0.45px;color:#333;width:37px;overflow:hidden">Supplier A</div>
<div class="a" style="left:193.0px;top:332px;width:1px;height:266px;background:#222"></div>
<div class="a" style="left:268.0px;top:332px;width:1px;height:266px;background:#222"></div>
<div class="a" style="left:352.0px;top:332px;width:1px;height:266px;background:#222"></div>
<div class="a" style="left:408.0px;top:332px;width:1px;height:266px;background:#222"></div>
<div class="a" style="left:534.0px;top:332px;width:1px;height:266px;background:#222"></div>
<div class="a" style="left:599.0px;top:332px;width:1px;height:266px;background:#222"></div>
<div class="a" style="left:674.0px;top:332px;width:1px;height:266px;background:#222"></div>
<div class="a" style="left:749.5px;top:332px;width:1px;height:266px;background:#222"></div>
<div class="a" style="left:824.5px;top:332px;width:1px;height:266px;background:#222"></div>
<div class="a" style="left:900.0px;top:332px;width:1px;height:266px;background:#222"></div>
<div class="a" style="left:975.0px;top:332px;width:1px;height:266px;background:#222"></div>
<div class="a" style="left:31px;top:364px;width:984px;height:1px;background:#222"></div>
<div class="a" style="left:1015px;top:331px;width:9px;height:277px;background:#F9FBFD"></div>
<div class="a" style="left:31px;top:598px;width:993px;height:10px;background:#F9FBFD"></div>
<div class="a" style="left:33px;top:599px;width:917px;height:6.5px;border-radius:4px;background:#DADCE0"></div>
<div class="a" style="left:0;top:606.5px;width:1024px;height:1.5px;background:#E3E3E3"></div>
<div class="a" style="left:1015px;top:331px;width:1px;height:276px;background:#ECEDEF"></div>
<div class="a" style="left:1016px;top:574.5px;width:8px;height:1px;background:#E6E7E9"></div>
<div class="a" style="left:1016px;top:585.5px;width:8px;height:1px;background:#E6E7E9"></div>
<div class="a" style="left:1016px;top:597px;width:8px;height:1px;background:#E6E7E9"></div>
<svg style="left:1018px;top:578px" width="5" height="3" viewBox="0 0 5 3"><path d="M0 3L2.5 0 5 3z" fill="#B5B7BA"/></svg>
<svg style="left:1018px;top:590px" width="5" height="3" viewBox="0 0 5 3"><path d="M0 0L2.5 3 5 0z" fill="#B5B7BA"/></svg>
<div class="a" style="left:992px;top:598.5px;width:1px;height:8px;background:#E6E7E9"></div>
<div class="a" style="left:1004.5px;top:598.5px;width:1px;height:8px;background:#E6E7E9"></div>
<svg style="left:997px;top:601px" width="3" height="5" viewBox="0 0 3 5"><path d="M3 0L0 2.5 3 5z" fill="#B5B7BA"/></svg>
<svg style="left:1009px;top:601px" width="3" height="5" viewBox="0 0 3 5"><path d="M0 0L3 2.5 0 5z" fill="#B5B7BA"/></svg>
</body></html>
